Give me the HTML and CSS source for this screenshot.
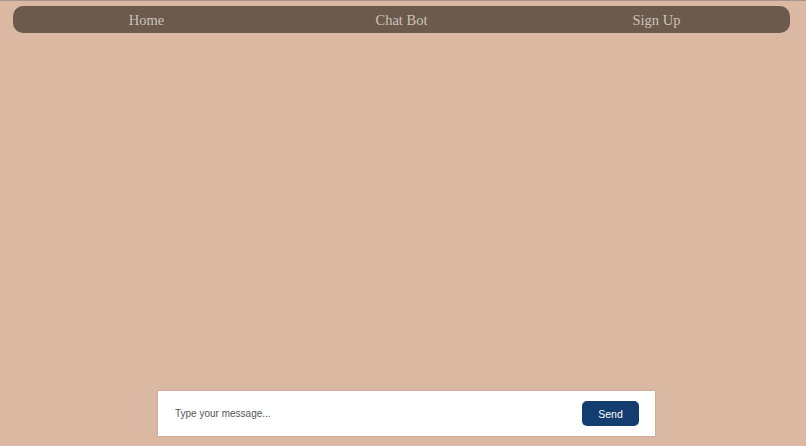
FILE: index.html
```html
<!DOCTYPE html>
<html lang="en">
<head>
<meta charset="utf-8">
<title>Chat Bot</title>
<link rel="stylesheet" href="styles.css">
</head>
<body>
<div class="topline"></div>
<nav class="nav">
  <a class="nav-item" href="#">Home</a>
  <a class="nav-item" href="#">Chat Bot</a>
  <a class="nav-item" href="#">Sign Up</a>
</nav>
<main class="chat"></main>
<form class="composer">
  <input class="composer-input" type="text" placeholder="Type your message...">
  <button class="composer-send" type="button">Send</button>
</form>
</body>
</html>
```

FILE: styles.css
```css
html, body {
  margin: 0;
  padding: 0;
  height: 100%;
}
body {
  background: #dbb8a2;
  display: flex;
  flex-direction: column;
  font-family: "Liberation Sans", Arial, sans-serif;
}
.topline {
  height: 1px;
  background: #a8958a;
}
.nav {
  margin: 5px 16px 0 13px;
  height: 27px;
  background: #6c5b4c;
  border-radius: 10px;
  display: flex;
  justify-content: center;
  align-items: center;
}
.nav-item {
  width: 255px;
  text-align: center;
  font-family: "Liberation Serif", "Times New Roman", serif;
  font-size: 14.5px;
  color: #cbc2ba;
  text-decoration: none;
  padding-top: 1px;
}
.chat {
  flex: 1;
}
.composer {
  margin: 0 0 10px 158px;
  width: 497px;
  height: 45px;
  box-sizing: border-box;
  background: #ffffff;
  box-shadow: 0 0 2px rgba(80, 50, 30, 0.25);
  display: flex;
  align-items: center;
  padding: 0 16px 0 17px;
}
.composer-input {
  flex: 1;
  border: none;
  outline: none;
  background: transparent;
  font-family: "Liberation Sans", Arial, sans-serif;
  font-size: 10px;
  color: #333;
  padding: 0;
}
.composer-input::placeholder {
  color: #555;
}
.composer-send {
  width: 57px;
  height: 25px;
  border: none;
  border-radius: 5px;
  background: #123d6e;
  color: #ffffff;
  font-family: "Liberation Sans", Arial, sans-serif;
  font-size: 10.5px;
  padding: 0;
}
```
